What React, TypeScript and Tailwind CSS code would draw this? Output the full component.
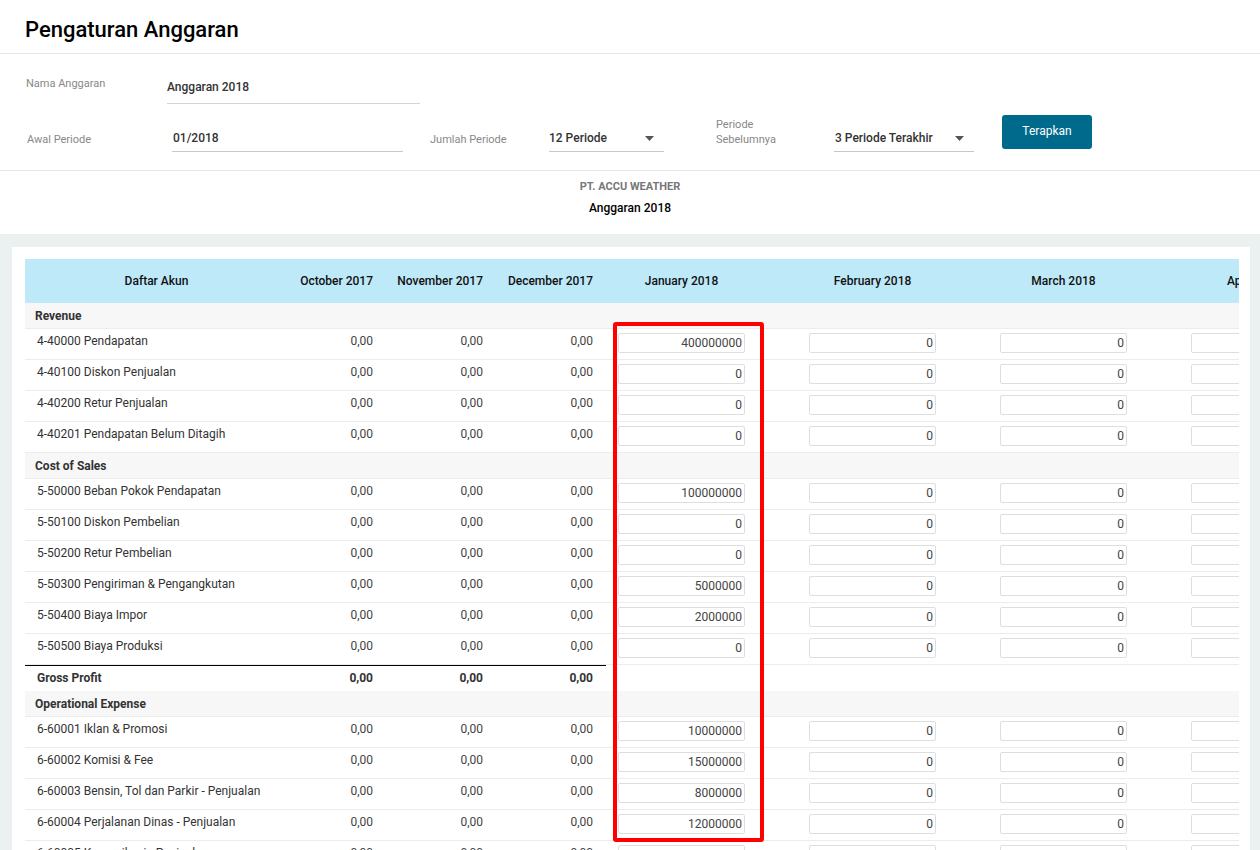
import { Fragment } from "react"

type Row = { name: string; jan: string }
type Section = { title: string; rows: Row[]; total?: string }

const sections: Section[] = [
  {
    title: "Revenue",
    rows: [
      { name: "4-40000 Pendapatan", jan: "400000000" },
      { name: "4-40100 Diskon Penjualan", jan: "0" },
      { name: "4-40200 Retur Penjualan", jan: "0" },
      { name: "4-40201 Pendapatan Belum Ditagih", jan: "0" }
    ]
  },
  {
    title: "Cost of Sales",
    rows: [
      { name: "5-50000 Beban Pokok Pendapatan", jan: "100000000" },
      { name: "5-50100 Diskon Pembelian", jan: "0" },
      { name: "5-50200 Retur Pembelian", jan: "0" },
      { name: "5-50300 Pengiriman & Pengangkutan", jan: "5000000" },
      { name: "5-50400 Biaya Impor", jan: "2000000" },
      { name: "5-50500 Biaya Produksi", jan: "0" }
    ],
    total: "Gross Profit"
  },
  {
    title: "Operational Expense",
    rows: [
      { name: "6-60001 Iklan & Promosi", jan: "10000000" },
      { name: "6-60002 Komisi & Fee", jan: "15000000" },
      { name: "6-60003 Bensin, Tol dan Parkir - Penjualan", jan: "8000000" },
      { name: "6-60004 Perjalanan Dinas - Penjualan", jan: "12000000" },
      { name: "6-60005 Komunikasi - Penjualan", jan: "0" }
    ]
  }
]

const pastMonths = ["October 2017", "November 2017", "December 2017"]
const budgetMonths = ["January 2018", "February 2018", "March 2018", "April 2018", "May 2018"]

function Arrow() {
  return (
    <svg width="9" height="5" viewBox="0 0 9 5" className="mt-[1px]">
      <polygon points="0,0 9,0 4.5,5" fill="#555" />
    </svg>
  )
}

function BudgetInput({ value }: { value: string }) {
  return (
    <input
      readOnly
      value={value}
      className="w-[127px] h-5 border border-[#dedede] rounded-[2px] bg-white text-right pr-[2px] text-[12px] text-[#444] outline-none"
    />
  )
}

function App() {
  return (
    <div className="min-h-screen bg-[#ebf0f0] font-[Roboto,sans-serif] text-[#333]">
      {/* Header */}
      <div className="bg-white">
        <div className="h-[54px] border-b border-[#e6e6e6] pl-[25px] pt-[6px] flex items-center">
          <h1 className="text-[22px] font-medium text-black leading-none">Pengaturan Anggaran</h1>
        </div>

        {/* Form */}
        <div className="pl-[26px] pt-[23px] pb-[18px]">
          <div className="flex items-start">
            <div className="w-[141px] text-[11px] leading-[14px] text-[#888]">Nama Anggaran</div>
            <div className="mt-[2px] w-[253px] border-b border-[#d5d5d5] pb-[8px] text-[12px] leading-[16px] font-medium text-[#333]">
              Anggaran 2018
            </div>
          </div>
          <div className="flex items-start mt-[11px]">
            <div className="ml-[1px] w-[145px] mt-[18px] text-[11px] leading-[14px] text-[#888]">Awal Periode</div>
            <div className="mt-[15px] w-[231px] border-b border-[#c8c8c8] pb-[5px] pl-[1px] text-[12px] leading-[16px] font-medium text-[#333]">
              01/2018
            </div>
            <div className="ml-[27px] w-[119px] mt-[18px] text-[11px] leading-[14px] text-[#888]">Jumlah Periode</div>
            <div className="mt-[15px] w-[115px] border-b border-[#c8c8c8] pb-[5px] pr-[10px] flex items-center justify-between text-[12px] leading-[16px] font-medium text-[#333]">
              <span>12 Periode</span>
              <Arrow />
            </div>
            <div className="ml-[52px] w-[118px] mt-[2px] text-[11px] leading-[15px] text-[#888]">
              Periode
              <br />
              Sebelumnya
            </div>
            <div className="mt-[15px] w-[140px] border-b border-[#c8c8c8] pb-[5px] pl-[1px] pr-[10px] flex items-center justify-between text-[12px] leading-[16px] font-medium text-[#333]">
              <span>3 Periode Terakhir</span>
              <Arrow />
            </div>
            <button className="ml-[28px] w-[90px] h-[34px] rounded-[3px] bg-[#006a8c] text-white text-[12px] pb-[2px]">
              Terapkan
            </button>
          </div>
        </div>

        {/* Company */}
        <div className="border-t border-[#e6e6e6] pt-[9px] pb-[18px] text-center">
          <div className="text-[11px] leading-[14px] font-bold text-[#777]">PT. ACCU WEATHER</div>
          <div className="mt-[6px] text-[12px] leading-[16px] font-medium text-black">Anggaran 2018</div>
        </div>
      </div>

      {/* Table card */}
      <div className="pt-[13px] pl-[12px] pr-[10px]">
        <div className="bg-white pt-[12px] pl-[13px] pr-[11px] pb-8">
          <div className="relative overflow-hidden">
            <div className="w-max text-[12px]">
              {/* Column header */}
              <div className="flex h-[44px] items-center bg-[#bde9f9] font-medium text-[#111]">
                <div className="w-[251px] pl-3 text-center">Daftar Akun</div>
                {pastMonths.map((m) => (
                  <div key={m} className="w-[110px] pr-[13px] text-right">{m}</div>
                ))}
                {budgetMonths.map((m) => (
                  <div key={m} className="w-[191px] pl-3">
                    <div className="w-[127px] text-center">{m}</div>
                  </div>
                ))}
              </div>

              {sections.map((s) => (
                <Fragment key={s.title}>
                  <div className="flex h-[26px] items-center bg-[#f7f7f7] border-b border-[#ececec] pl-[10px] font-bold text-[#333]">
                    {s.title}
                  </div>
                  {s.rows.map((r) => (
                    <div key={r.name} className="flex h-[31px] border-b border-[#ececec] pt-1 leading-[16px]">
                      <div className="w-[251px] pl-3 text-[#333]">{r.name}</div>
                      {pastMonths.map((m) => (
                        <div key={m} className="w-[110px] pr-[13px] text-right text-[#444]">0,00</div>
                      ))}
                      {budgetMonths.map((m, i) => (
                        <div key={m} className="w-[191px] pl-3">
                          <BudgetInput value={i === 0 ? r.jan : "0"} />
                        </div>
                      ))}
                    </div>
                  ))}
                  {s.total && (
                    <div className="flex h-[26px] items-center font-bold text-[#333]">
                      <div className="flex h-full items-center border-t border-black pb-[2px]">
                        <div className="w-[251px] pl-3">{s.total}</div>
                        {pastMonths.map((m) => (
                          <div key={m} className="w-[110px] pr-[13px] text-right">0,00</div>
                        ))}
                      </div>
                    </div>
                  )}
                </Fragment>
              ))}
            </div>

            {/* highlight */}
            <div className="absolute left-[588px] top-[63px] w-[151px] h-[520px] border-4 border-[#ff0000] rounded-[3px] pointer-events-none" />
          </div>
        </div>
      </div>
    </div>
  )
}

export default App
